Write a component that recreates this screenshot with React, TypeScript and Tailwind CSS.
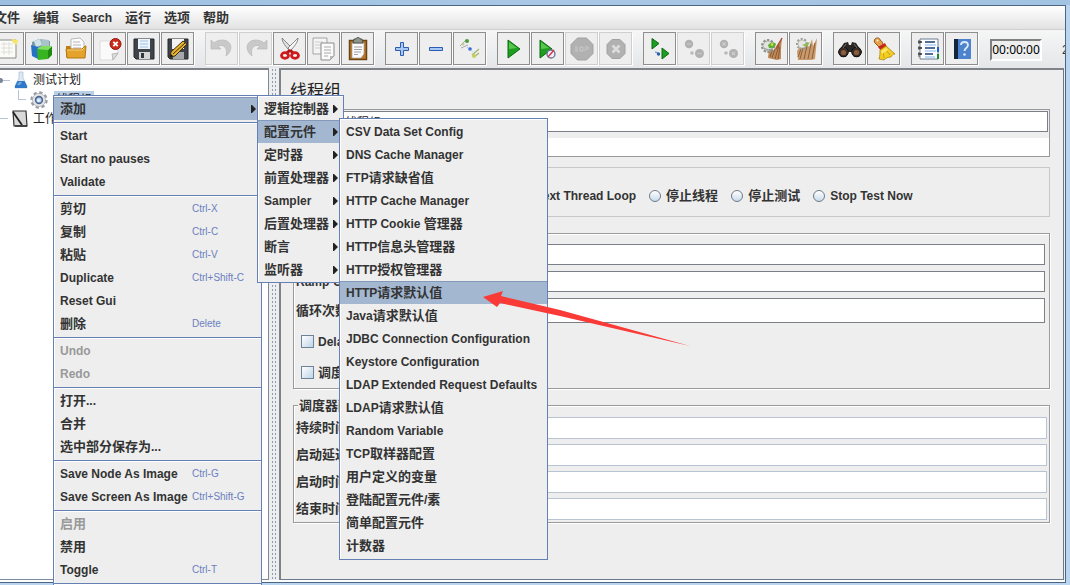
import type { ReactNode } from "react";
import clsx from "clsx";

type MenuEntry = {
  label?: string;
  shortcut?: string;
  disabled?: boolean;
  active?: boolean;
  separator?: boolean;
  arrow?: boolean;
  items?: MenuEntry[];
};

const menuBar = ["文件", "编辑", "Search", "运行", "选项", "帮助"];

const configElements: MenuEntry[] = [
  { label: "CSV Data Set Config" },
  { label: "DNS Cache Manager" },
  { label: "FTP请求缺省值" },
  { label: "HTTP Cache Manager" },
  { label: "HTTP Cookie 管理器" },
  { label: "HTTP信息头管理器" },
  { label: "HTTP授权管理器" },
  { label: "HTTP请求默认值", active: true },
  { label: "Java请求默认值" },
  { label: "JDBC Connection Configuration" },
  { label: "Keystore Configuration" },
  { label: "LDAP Extended Request Defaults" },
  { label: "LDAP请求默认值" },
  { label: "Random Variable" },
  { label: "TCP取样器配置" },
  { label: "用户定义的变量" },
  { label: "登陆配置元件/素" },
  { label: "简单配置元件" },
  { label: "计数器" },
];

const addMenu: MenuEntry[] = [
  { label: "逻辑控制器", arrow: true },
  { label: "配置元件", arrow: true, active: true, items: configElements },
  { label: "定时器", arrow: true },
  { label: "前置处理器", arrow: true },
  { label: "Sampler", arrow: true },
  { label: "后置处理器", arrow: true },
  { label: "断言", arrow: true },
  { label: "监听器", arrow: true },
];

const contextMenu: MenuEntry[] = [
  { label: "添加", arrow: true, active: true, items: addMenu },
  { separator: true },
  { label: "Start" },
  { label: "Start no pauses" },
  { label: "Validate" },
  { separator: true },
  { label: "剪切", shortcut: "Ctrl-X" },
  { label: "复制", shortcut: "Ctrl-C" },
  { label: "粘贴", shortcut: "Ctrl-V" },
  { label: "Duplicate", shortcut: "Ctrl+Shift-C" },
  { label: "Reset Gui" },
  { label: "删除", shortcut: "Delete" },
  { separator: true },
  { label: "Undo", disabled: true },
  { label: "Redo", disabled: true },
  { separator: true },
  { label: "打开..." },
  { label: "合并" },
  { label: "选中部分保存为..." },
  { separator: true },
  { label: "Save Node As Image", shortcut: "Ctrl-G" },
  { label: "Save Screen As Image", shortcut: "Ctrl+Shift-G" },
  { separator: true },
  { label: "启用", disabled: true },
  { label: "禁用" },
  { label: "Toggle", shortcut: "Ctrl-T" },
  { separator: true },
];

// Chinese runs are set one pixel larger than the Latin ones
const Label = ({ text }: { text: string }) => (
  <>
    {text.split(/([\u4e00-\u9fff：]+)/).filter(Boolean).map((part, i) =>
      /[\u4e00-\u9fff]/.test(part) ? (
        <span key={i} className="text-[13px]">{part}</span>
      ) : (
        part
      )
    )}
  </>
);

/* ---------- toolbar icons ---------- */

const Svg = ({ children }: { children: ReactNode }) => (
  <svg viewBox="0 0 24 24" className="w-6 h-6 shrink-0" fill="none" aria-hidden="true">
    {children}
  </svg>
);

const NewIcon = () => (
  <Svg>
    <path d="M2 3h18v18H2z" fill="#fbfbf8" stroke="#8b8b86" />
    <path d="M5 7h12M5 11h12M5 15h12M8 5v13M13 5v13" stroke="#dededa" />
    <path d="M16 2l6 1-1 5-5-3z" fill="#f3e66a" />
  </Svg>
);

const TemplatesIcon = () => (
  <Svg>
    <path d="M2 5l7-3 11 2v8l-9 4-9-4z" fill="#7d9aa8" />
    <path d="M4 4l6-2 2 6-6 2z" fill="#cfe3ea" />
    <path d="M11 2l8 1v7l-7 1z" fill="#a9c4c9" />
    <path d="M1 8l7 2v12l-6-3z" fill="#2673c4" />
    <path d="M8 10l5 1v10l-5 1z" fill="#58a6e6" />
    <path d="M7 12l11 1v9L8 23z" fill="#37b41f" />
    <path d="M18 13l4-4v9l-4 4z" fill="#1f8a12" />
    <path d="M7 12l5-3 10 0-4 4z" fill="#7fe05b" />
  </Svg>
);

const OpenIcon = () => (
  <Svg>
    <path d="M2 9h5l1 3h13v8H2z" fill="#c27d10" />
    <path d="M7 2l9-1 4 4v11H7z" fill="#fdfdfd" stroke="#b9b9b9" />
    <path d="M9 5h7M9 8h8M9 11h8" stroke="#b5b5b5" />
    <path d="M2 12h16l3-3h1l-1 12H3z" fill="#e3a32c" stroke="#b5760e" />
    <path d="M3 13h15l2-2" stroke="#f8cf75" />
  </Svg>
);

const CloseIcon = () => (
  <Svg>
    <path d="M2 4h18v13l-5 6H2z" fill="#fafafa" stroke="#dcdcdc" />
    <path d="M20 16l-5 7-1-6z" fill="#dedede" stroke="#999" strokeWidth=".6" />
    <circle cx="17.500" cy="7" r="5.500" fill="#c92a1c" stroke="#96170d" />
    <path d="M15.300 4.800l4.400 4.400M19.700 4.800l-4.400 4.400" stroke="#fff" strokeWidth="1.800" />
  </Svg>
);

const SaveIcon = () => (
  <Svg>
    <path d="M2 2h20v20H4l-2-2z" fill="#3f444b" stroke="#24272b" />
    <path d="M6 2h12v10H6z" fill="#eef4fb" />
    <path d="M8 4h8M8 7h8M8 10h8" stroke="#9ec0e6" />
    <path d="M7 15h11v7H7z" fill="#d4d6d8" />
    <path d="M9 16h3v5H9z" fill="#33373c" />
  </Svg>
);

const SaveAsIcon = () => (
  <Svg>
    <path d="M2 2h20v20H4l-2-2z" fill="#3f444b" stroke="#24272b" />
    <path d="M6 2h12v10H6z" fill="#f1f3f5" />
    <path d="M7 15h11v7H7z" fill="#a5a7a9" />
    <path d="M4 20l1-5L17 4l4 3L9 19z" fill="#e9b432" stroke="#3c2c0c" />
    <path d="M7 17L19 6" stroke="#3c2c0c" />
    <path d="M4 20l1-3 2 2z" fill="#111" />
  </Svg>
);

const UndoIcon = () => (
  <Svg>
    <path d="M1 3v9h10L8 9c6-2 10 2 8 10 7-5 7-15-3-16-4 0-7 1-9 3z" fill="#c9c9c9" stroke="#b8b8b8" strokeWidth=".7" />
  </Svg>
);

const RedoIcon = () => (
  <Svg>
    <path d="M23 3v9H13l3-3c-6-2-10 2-8 10C1 14 1 4 11 3c4 0 7 1 9 3z" fill="#c9c9c9" stroke="#b8b8b8" strokeWidth=".7" />
  </Svg>
);

const CutIcon = () => (
  <Svg>
    <path d="M4 1c0 4 4 9 8 13l2-3z" fill="#e0e0e0" stroke="#6f6f6f" strokeWidth=".8" />
    <path d="M20 1c0 4-4 9-8 13l-2-3z" fill="#f6f6f6" stroke="#6f6f6f" strokeWidth=".8" />
    <path d="M12 13l-4 4M12 13l4 4" stroke="#b41414" strokeWidth="3" />
    <ellipse cx="7" cy="18.500" rx="3.500" ry="2.800" stroke="#cf1b1b" strokeWidth="2.800" />
    <ellipse cx="17" cy="18.500" rx="3.500" ry="2.800" stroke="#cf1b1b" strokeWidth="2.800" />
  </Svg>
);

const CopyIcon = () => (
  <Svg>
    <path d="M1 1h14v16H1z" fill="#f4f4f4" stroke="#a5a5a5" />
    <path d="M3 5h8M3 8h6M3 11h6" stroke="#ccc" />
    <path d="M9 6h13v13l-4 4H9z" fill="#fafafa" stroke="#8b8b8b" />
    <path d="M12 10h7M12 13h7M12 16h7M12 19h4" stroke="#aaa" />
    <path d="M22 19l-4 4v-4z" fill="#bbb" />
  </Svg>
);

const PasteIcon = () => (
  <Svg>
    <path d="M3.500 3.500h17v19h-17z" fill="#b9772a" stroke="#6e4312" strokeWidth="1.500" />
    <path d="M6 6h12v11l-3 4H6z" fill="#fbfbfb" stroke="#999" strokeWidth=".6" />
    <path d="M8 10h8M8 12.500h8M8 15h7M8 17.500h4" stroke="#a0a0a8" />
    <path d="M8 2h2c0-2 4-2 4 0h2l1 4H7z" fill="#8d948c" stroke="#4c524c" />
  </Svg>
);

const PlusIcon = () => (
  <Svg>
    <path d="M10.500 5.500h3v5h5v3h-5v5h-3v-5h-5v-3h5z" fill="#a9c7f3" stroke="#2b5cb0" />
  </Svg>
);

const MinusIcon = () => (
  <Svg>
    <path d="M5.500 10.500h13v3h-13z" fill="#a9c7f3" stroke="#2b5cb0" />
  </Svg>
);

const ToggleIcon = () => (
  <Svg>
    <path d="M2 9l6-6M3 11l7-3" stroke="#a9a9a9" />
    <circle cx="9" cy="4" r="2" fill="#4e9a3a" />
    <circle cx="5" cy="7" r="1.500" fill="#c9c9a0" />
    <circle cx="12" cy="12" r="1.800" fill="#2a62d8" />
    <path d="M9 10l6 5" stroke="#8fb6ee" strokeDasharray="1 1" />
    <path d="M14 18l7-6M16 20l5-4" stroke="#a9b878" strokeWidth="1.500" />
    <circle cx="16" cy="19" r="2" fill="#c8ce5a" />
  </Svg>
);

const StartIcon = () => (
  <Svg>
    <path d="M6 3l12 9-12 9z" fill="#1f9d1f" stroke="#0c6b10" />
    <path d="M7 5l8 6-8 1z" fill="#57c84e" />
  </Svg>
);

const StartNoPauseIcon = () => (
  <Svg>
    <path d="M4 3l12 9-12 9z" fill="#1f9d1f" stroke="#0c6b10" />
    <path d="M5 5l8 6-8 1z" fill="#57c84e" />
    <circle cx="15" cy="17" r="4" fill="#eef" stroke="#68708a" strokeWidth="1.300" />
    <path d="M12 20l6-7" stroke="#d8344a" strokeWidth="1.400" />
  </Svg>
);

const StopIcon = () => (
  <Svg>
    <path d="M7.500 1h9L23 7.500v9L16.500 23h-9L1 16.500v-9z" fill="#b1b1b1" stroke="#a2a2a2" />
    <path d="M5 10h3M5 12h3M5 14h3M10 10h3v4h-3zM15 10h3v2h-3v2" stroke="#c9c9c9" />
  </Svg>
);

const ShutdownIcon = () => (
  <Svg>
    <path d="M8 2.500h8l5 5v9l-5 5H8l-5-5v-9z" fill="#b1b1b1" stroke="#a2a2a2" />
    <path d="M8.500 8.500l7 7M15.500 8.500l-7 7" stroke="#dcdcdc" strokeWidth="2.600" />
  </Svg>
);

const RemoteStartIcon = () => (
  <Svg>
    <path d="M4 1.500l7 5L4 12z" fill="#1f9d1f" stroke="#0c6b10" />
    <path d="M14 11l7 5.500-7 5.500z" fill="#1f9d1f" stroke="#0c6b10" />
    <path d="M7 15l3 1" stroke="#7fa5d6" strokeWidth="1.500" />
    <circle cx="10.500" cy="17" r="1.700" fill="#2f5fa8" />
  </Svg>
);

const RemoteStopIcon = () => (
  <Svg>
    <circle cx="7" cy="7" r="4.200" fill="#b1b1b1" />
    <circle cx="17.500" cy="16.500" r="4.500" fill="#b1b1b1" />
    <path d="M5 7h4M15 16.500h5" stroke="#c4c4c4" strokeWidth="1.300" />
    <circle cx="10" cy="16" r="1.800" fill="#b9b9b9" />
  </Svg>
);

const RemoteShutdownIcon = () => (
  <Svg>
    <circle cx="8" cy="7" r="4.200" fill="#b1b1b1" />
    <circle cx="17.500" cy="16.500" r="4.500" fill="#b1b1b1" />
    <path d="M6.500 5.500l3 3M9.500 5.500l-3 3M16 15l3 3M19 15l-3 3" stroke="#cdcdcd" strokeWidth="1.300" />
    <circle cx="10" cy="16" r="1.800" fill="#b9b9b9" />
  </Svg>
);

const ClearIcon = () => (
  <Svg>
    <path d="M9 12l5 1 3-5 5-7-1 11v10l-4 1-9-2z" fill="#bd8a5c" />
    <path d="M12 21l3-9M15 22l4-14M18 22l2-12M10 20l2-6" stroke="#8c5a30" />
    <path d="M22 1l-6 11" stroke="#a8533a" strokeWidth="1.500" />
    <circle cx="8" cy="9" r="6" stroke="#8d928a" strokeWidth="2.200" strokeDasharray="2.200 1.600" />
    <circle cx="8" cy="9" r="5" fill="#e2e4df" stroke="#8d928a" strokeWidth=".7" />
    <path d="M4 11c3 2 6 2 9 1" stroke="#8d928a" />
    <path d="M8 8c3-3 6-3 8-1-1 4-4 5-7 4z" fill="#5fae35" />
    <circle cx="12" cy="7.500" r="1.300" fill="#d9e24c" />
  </Svg>
);

const ClearAllIcon = () => (
  <Svg>
    <path d="M3 14l3-4 4 1 2-5 3 4 3-8 1 7 4-8-1 11-1 10-4 1H4z" fill="#c99a6c" />
    <path d="M6 22l3-11M10 22l3-13M14 22l3-15M18 22l3-16M4 20l3-8" stroke="#8e5f38" />
    <circle cx="8" cy="7" r="5" stroke="#989b94" strokeWidth="2" strokeDasharray="2 1.600" />
    <circle cx="8" cy="7" r="4" fill="#e6e7e3" stroke="#a5a7a0" strokeWidth=".6" />
    <path d="M8 8l8-3-3 5z" fill="#8bb85a" />
  </Svg>
);

const SearchIcon = () => (
  <Svg>
    <path d="M6 6l4-1 1 3h2l1-3 4 1 6 9-3 5h-5l-2-5h-4l-2 5H3l-3-5z" fill="#2b2724" />
    <circle cx="5.500" cy="15" r="4.800" fill="#3a2f28" stroke="#141210" />
    <circle cx="18.500" cy="15" r="4.800" fill="#3a2f28" stroke="#141210" />
    <circle cx="5.500" cy="15.500" r="2.600" fill="#8a5c3c" />
    <circle cx="18.500" cy="15.500" r="2.600" fill="#8a5c3c" />
    <path d="M8 7l-3 4M16 7l3 4" stroke="#77706a" />
  </Svg>
);

const ResetSearchIcon = () => (
  <Svg>
    <path d="M3 2c2-2 5-1 5 1 2 1 3 3 3 5l-4 2-4-4c-1-1-1-3 0-4z" fill="#e5a24b" stroke="#94561a" />
    <circle cx="5.500" cy="3.500" r="1" fill="#fff3dc" />
    <path d="M6 10l7-4 2 4-6 4z" fill="#c8281c" />
    <path d="M8 13l6-4 9 8c-2 0-3 1-4 3-3 0-5 1-7 3l-5-1c1-3 1-6 1-9z" fill="#f4cf22" stroke="#a98409" strokeWidth=".8" />
    <path d="M11 14l1 7M14 13l4 5" stroke="#c79f14" />
    <path d="M9 14l5-3 2 2-6 4z" fill="#fbe671" />
  </Svg>
);

const FunctionIcon = () => (
  <Svg>
    <path d="M4 2h18v20H4z" fill="#fff" stroke="#6d7f91" />
    <path d="M2 5h4M2 11h4M2 17h4" stroke="#222" strokeWidth="1.500" />
    <path d="M3 3v4M3 9v4M3 15v5" stroke="#555" />
    <path d="M9 5h10M9 11h10M9 17h8" stroke="#1e3f73" strokeWidth="1.400" />
    <path d="M9 8h11M9 14h11M9 20h10" stroke="#7db4ee" />
    <path d="M22 10v5" stroke="#1b5fd0" strokeWidth="2" />
    <path d="M22 17v5" stroke="#158a2c" strokeWidth="2" />
  </Svg>
);

const HelpIcon = () => (
  <Svg>
    <path d="M4 2h17v20H4z" fill="#4d82cc" />
    <path d="M4 2h4v20H4z" fill="#16233c" />
    <path d="M11 8c0-4 7-4 7 0 0 3-3.500 3-3.500 6" stroke="#dbe9fb" strokeWidth="1.800" />
    <circle cx="14.500" cy="17.500" r="1.300" fill="#dbe9fb" />
  </Svg>
);

const toolGroups = [
  [
    { name: "新建", icon: NewIcon },
    { name: "模板", icon: TemplatesIcon },
    { name: "打开", icon: OpenIcon },
    { name: "关闭", icon: CloseIcon },
    { name: "保存", icon: SaveIcon },
    { name: "另存为", icon: SaveAsIcon },
  ],
  [
    { name: "撤销", icon: UndoIcon, disabled: true },
    { name: "重做", icon: RedoIcon, disabled: true },
    { name: "剪切", icon: CutIcon },
    { name: "复制", icon: CopyIcon },
    { name: "粘贴", icon: PasteIcon },
  ],
  [
    { name: "展开", icon: PlusIcon },
    { name: "折叠", icon: MinusIcon },
    { name: "切换", icon: ToggleIcon },
  ],
  [
    { name: "启动", icon: StartIcon },
    { name: "不停顿启动", icon: StartNoPauseIcon },
    { name: "停止", icon: StopIcon, disabled: true },
    { name: "关闭线程", icon: ShutdownIcon, disabled: true },
  ],
  [
    { name: "远程启动", icon: RemoteStartIcon },
    { name: "远程停止", icon: RemoteStopIcon, disabled: true },
    { name: "远程关闭", icon: RemoteShutdownIcon, disabled: true },
  ],
  [
    { name: "清除", icon: ClearIcon },
    { name: "清除全部", icon: ClearAllIcon },
  ],
  [
    { name: "查找", icon: SearchIcon },
    { name: "重置查找", icon: ResetSearchIcon },
  ],
  [
    { name: "函数助手", icon: FunctionIcon },
    { name: "帮助", icon: HelpIcon },
  ],
];

const Toolbar = () => (
  <div className="flex h-[38px] shrink-0 items-start overflow-hidden bg-gradient-to-b from-[#f6f6f6] to-[#e4e6e9] pt-0.5">
    <div className="-ml-[9px] flex gap-[11px]">
      {toolGroups.map((group, i) => (
        <div key={i} className="flex gap-px">
          {group.map(({ name, icon: Icon, disabled }) => (
            <button
              key={name}
              aria-label={name}
              disabled={disabled}
              className={clsx(
                "flex w-[33px] h-[33px] items-center justify-center border bg-[#eeeeee] shadow-[1px_1px_0_#fff]",
                disabled ? "border-[#cfcfcf]" : "border-[#8e8e8e]"
              )}
            >
              <Icon />
            </button>
          ))}
        </div>
      ))}
    </div>
    <div className="ml-3 mt-[7px] h-[22px] w-[52px] shrink-0 border-2 border-r-white border-b-white border-l-[#808080] border-t-[#808080] bg-[#eeeeee] text-center font-['Noto_Sans'] text-xs leading-[18px] whitespace-nowrap text-black">
      00:00:00
    </div>
    <span className="ml-5 mt-[9px] text-xs leading-[18px] text-[#333]">2</span>
  </div>
);

/* ---------- popup menus ---------- */

const Menu = ({ items, className }: { items: MenuEntry[]; className: string }) => (
  <ul
    className={clsx(
      "absolute border border-[#6480b4] bg-[#eeeeee] py-px shadow-[inset_1px_1px_0_#fff]",
      className
    )}
  >
    {items.map((item, i) =>
      item.separator ? (
        <li key={i} className="flex h-1 items-center pt-px">
          <div className="h-px w-full bg-[#6480b4] shadow-[0_1px_0_#fff]" />
        </li>
      ) : (
        <li key={i} className="relative">
          <button
            disabled={item.disabled}
            className={clsx(
              "flex h-[23px] w-full items-center pl-1.5 text-left text-xs font-bold whitespace-nowrap",
              item.active && "bg-[#a3b8d0] shadow-[inset_0_1px_0_#8299ba]",
              item.disabled ? "text-[#999]" : "text-[#333]"
            )}
          >
            <span className="flex-1">
              <Label text={item.label ?? ""} />
            </span>
            {item.shortcut && (
              <span className="w-[69px] text-[10px] font-normal text-[#6b80be]">{item.shortcut}</span>
            )}
            {item.arrow && (
              <svg viewBox="0 0 5 8" className="mr-[5px] h-2 w-[5px] shrink-0" aria-hidden="true">
                <path d="M0 0h1l4 4-4 4H0z" fill="#222" />
              </svg>
            )}
          </button>
          {item.items && (
            <Menu
              items={item.items}
              className={clsx(
                "-top-0.5 left-full -ml-1",
                item.items === addMenu ? "w-[87px]" : "w-[209px] pb-0.5"
              )}
            />
          )}
        </li>
      )
    )}
  </ul>
);

/* ---------- test plan tree ---------- */

const FlaskIcon = () => (
  <svg viewBox="0 0 14 18" className="h-[18px] w-3.5" aria-hidden="true">
    <path d="M5 1h4v6l4 8v2H1v-2l4-8z" fill="#dbe9f5" stroke="#a9bccd" strokeWidth=".7" />
    <path d="M3.500 10h7l2.500 5v2H1v-2z" fill="#2f77c8" />
    <path d="M5 11h3l-2 3H3z" fill="#6fa8e6" />
  </svg>
);

const GearIcon = () => (
  <svg viewBox="0 0 18 18" className="h-[18px] w-[18px]" aria-hidden="true">
    <circle cx="9" cy="9" r="7.500" fill="none" stroke="#9a9ea4" strokeWidth="2.400" strokeDasharray="3.300 2.590" />
    <circle cx="9" cy="9" r="6.500" fill="#e6e8ea" stroke="#a5a9ae" strokeWidth=".8" />
    <circle cx="9" cy="9" r="3.400" fill="#b9d3f0" stroke="#4d6690" strokeWidth="1.600" />
    <circle cx="8.500" cy="9.500" r="1.300" fill="#f4f9fe" />
  </svg>
);

const WorkbenchIcon = () => (
  <svg viewBox="0 0 16 18" className="h-[18px] w-4" aria-hidden="true">
    <path d="M1 1h13l1 15H2z" fill="#d9d9d9" stroke="#333" strokeWidth="1.200" />
    <path d="M1 2l9 13" stroke="#222" strokeWidth="1.800" />
    <path d="M3 16h12" stroke="#333" strokeWidth="1.600" />
  </svg>
);

const Tree = () => (
  <div className="w-[269px] shrink-0 border-t-2 border-r border-b border-t-[#7f8288] border-r-[#7a8a99] border-b-[#7a8a99] bg-white text-xs text-[#222]">
    <ul className="flex flex-col">
      <li className="flex h-5 items-center">
        <span className="-ml-0.5 h-[5px] w-[5px] rounded-full bg-[#7b8699]" />
        <span className="mr-1 h-px w-[7px] bg-[#b8c4d6]" />
        <FlaskIcon />
        <span className="ml-[5px]">测试计划</span>
      </li>
      <li className="flex h-[19px] items-center pl-[18px]">
        <span className="mr-1 h-2.5 w-2 self-start border-b border-l border-[#b8c4d6]" />
        <GearIcon />
        <span className="ml-[6px] bg-[#b8cfe5] px-0.5 leading-[18px]">线程组</span>
      </li>
      <li className="flex h-[19px] items-center">
        <span className="mr-1 h-px w-2 bg-[#b8c4d6]" />
        <WorkbenchIcon />
        <span className="ml-[5px]">工作台</span>
      </li>
    </ul>
  </div>
);

/* ---------- thread group panel ---------- */

const errorActions = ["继续", "Start Next Thread Loop", "停止线程", "停止测试", "Stop Test Now"];

const groupBorder = "relative border border-[#9a9a9a] shadow-[1px_1px_0_#fff,inset_1px_1px_0_#fff]";

const GroupTitle = ({ text }: { text: string }) => (
  <h3 className="absolute -top-2 left-1 bg-[#eeeeee] px-px leading-4">
    <Label text={text} />
  </h3>
);

const Field = ({ id, label, className }: { id: string; label: string; className: string }) => (
  <div className="flex items-center">
    <label htmlFor={id} className="w-44 shrink-0 pl-0.5">
      <Label text={label} />
    </label>
    <input id={id} type="text" className={clsx("min-w-0 flex-1 border bg-white px-1 outline-none", className)} />
  </div>
);

const Check = ({ label }: { label: string }) => (
  <label className="flex h-[31px] items-center gap-1 pl-[7px]">
    <input
      type="checkbox"
      className="h-[13px] w-[13px] appearance-none border border-[#6f8296] bg-gradient-to-br from-white to-[#bfd4e8]"
    />
    <span>
      <Label text={label} />
    </span>
  </label>
);

const ThreadGroup = () => (
  <section className="mr-px min-w-0 flex-1 border-t-2 border-r border-b border-l-2 border-t-[#7f8288] border-r-[#6a7a8a] border-b-[#6a7a8a] border-l-[#7f8288] bg-[#eeeeee] pr-[13px] pl-3 text-xs font-bold text-[#333]">
    <h2 className="-ml-[3px] h-[39px] text-[17px] leading-[43px] font-normal text-[#222]">线程组</h2>

    <div className="flex flex-col gap-1.5 border border-[#999] pt-px pr-px">
      <div className="flex items-center">
        <label htmlFor="name" className="w-[46px] shrink-0 pl-0.5">
          <Label text="名称：" />
        </label>
        <input
          id="name"
          type="text"
          defaultValue="线程组"
          className="h-[21px] min-w-0 flex-1 border border-[#7a7f88] bg-white pl-1 font-normal text-[#222] outline-none"
        />
      </div>
      <div className="-mr-px flex items-center">
        <label htmlFor="comment" className="w-[46px] shrink-0 pl-0.5">
          <Label text="注释：" />
        </label>
        <input id="comment" type="text" className="h-[18px] min-w-0 flex-1 bg-white px-1 outline-none" />
      </div>
    </div>

    <div className="relative mt-2.5 flex h-[50px] items-center justify-center gap-[13px] border border-[#c6c8cc] pt-2">
      <GroupTitle text="在取样器错误后要执行的动作" />
      {errorActions.map((action) => (
        <label key={action} className="flex items-center gap-[5px] whitespace-nowrap">
          <input
            type="radio"
            name="on-error"
            className="h-3 w-3 appearance-none rounded-full border border-[#6f7a86] bg-gradient-to-b from-white to-[#c9dbec]"
          />
          <span>
            <Label text={action} />
          </span>
        </label>
      ))}
    </div>

    <div className={clsx(groupBorder, "mt-4 flex flex-col gap-1.5 pt-2.5")}>
      <GroupTitle text="线程属性" />
      <div className="flex flex-col gap-1.5 pr-1">
        <Field id="threads" label="线程数：" className="h-[21px] border-[#7a7f88]" />
        <Field id="ramp-up" label="Ramp-Up Period (in seconds):" className="h-[21px] border-[#7a7f88]" />
        <Field id="loops" label="循环次数" className="h-[25px] border-[#7a7f88]" />
      </div>
      <div className="-mt-[3px]">
        <Check label="Delay Thread creation until needed" />
        <Check label="调度器" />
      </div>
    </div>

    <div className={clsx(groupBorder, "mt-4 flex flex-col gap-[5px] pt-[11px] pr-0.5 pb-0.5")}>
      <GroupTitle text="调度器配置" />
      <Field id="duration" label="持续时间（秒）" className="h-[22px] border-[#b8c4d2]" />
      <Field id="delay" label="启动延迟（秒）" className="h-[22px] border-[#b8c4d2]" />
      <Field id="start" label="启动时间" className="h-[22px] border-[#b8c4d2]" />
      <Field id="end" label="结束时间" className="h-[22px] border-[#b8c4d2]" />
    </div>
  </section>
);

export default function App() {
  return (
    <div className="relative flex h-screen flex-col overflow-hidden bg-[#b9d5f0] font-['Liberation_Sans','Noto_Sans_CJK_SC',sans-serif]">
      <div className="h-[5px] shrink-0 bg-gradient-to-r from-[#9dbfe0] via-[#a9c8e6] to-[#a3c3e2]" />
      <div className="mr-1 mb-0.5 flex min-h-0 flex-1 flex-col border-t border-r border-b border-[#4c6682] bg-white">
        <nav className="-ml-[6px] flex h-6 shrink-0 items-center gap-[13px] border-b border-[#cfcfcf] bg-gradient-to-b from-white to-[#e2e2e2] text-xs font-bold whitespace-nowrap text-[#333]">
          {menuBar.map((label) => (
            <button key={label}>
              <Label text={label} />
            </button>
          ))}
        </nav>
        <Toolbar />
        <main className="mb-0.5 flex min-h-0 flex-1 bg-[#eeeeee]">
          <Tree />
          <div className="mx-0.5 w-1.5 shrink-0 bg-[radial-gradient(circle,#8a9bb5_1px,transparent_1px)] bg-[length:3px_4px]" />
          <ThreadGroup />
        </main>
      </div>

      <Menu items={contextMenu} className="top-[95px] left-[53px] w-[209px]" />

      {/* Pointer to the highlighted entry */}
      <svg viewBox="0 0 208 56" className="pointer-events-none absolute top-[291px] left-[483px] h-14 w-52" aria-hidden="true">
        <path d="M0 6L20 0l-2 5 59 14 130 36-130-30L17 12l-3 4z" fill="#f93a36" />
      </svg>
    </div>
  );
}
